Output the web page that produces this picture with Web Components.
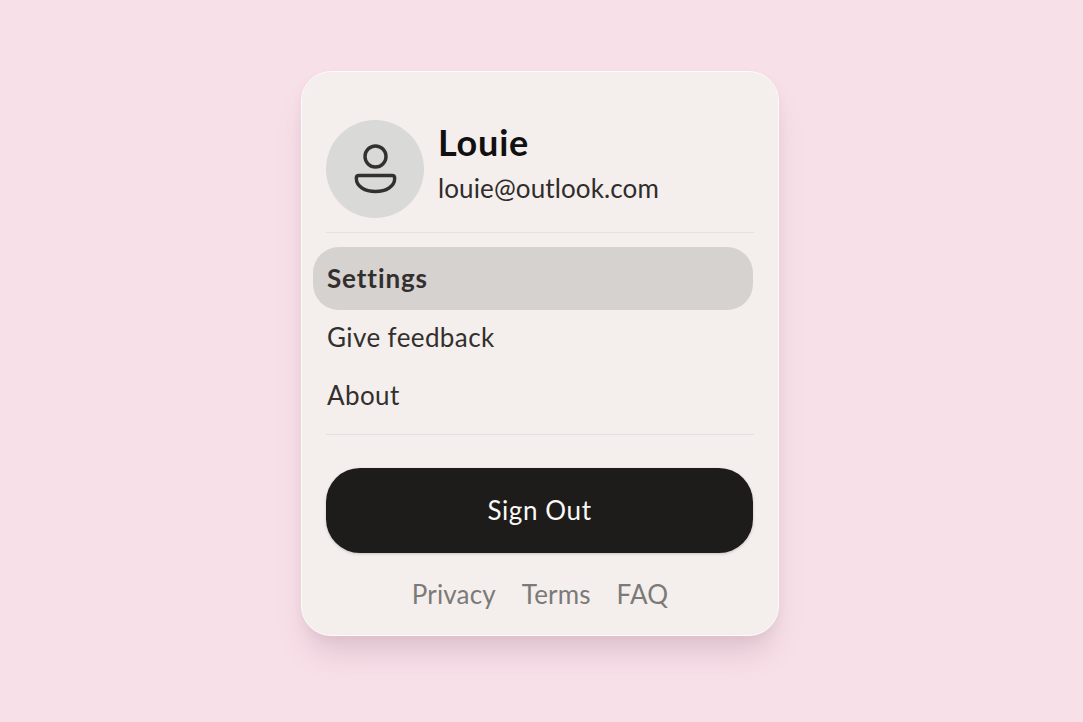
<!DOCTYPE html>
<html lang="en">
<head>
	<meta charset="utf-8">
	<title>Account</title>
	<style>
html, body { margin: 0; padding: 0; height: 100%; }
body { background: #f8e0e9; font-family: "Lato", "Liberation Sans", sans-serif; box-sizing: border-box; padding: 71px 0 0 301px; overflow: hidden; }
	</style>
</head>
<body>
	<account-card>
		<user-head slot="head" name="Louie" email="louie@outlook.com"></user-head>
		<menu-row active>Settings</menu-row>
		<menu-row>Give feedback</menu-row>
		<menu-row>About</menu-row>
		<sign-out slot="action">Sign Out</sign-out>
		<foot-links slot="foot">
			<span>Privacy</span>
			<span>Terms</span>
			<span>FAQ</span>
		</foot-links>
	</account-card>
	<script type="text/javascript">
function Shadow( host, html )
{
	const template = document.createElement( 'template' );
	template.innerHTML = html;
	host.attachShadow( { mode: 'open' } ).appendChild( template.content.cloneNode( true ) );
}

customElements.define( 'account-card', class extends HTMLElement
{
	constructor()
	{
		super();
		Shadow( this, `<style>
:host { display: block; box-sizing: border-box; width: 478px; height: 565px; padding: 48px 24px 0 24px; background: #f4efec; border: 1px solid #fcfafa; border-radius: 30px; box-shadow: 0 22px 30px -6px rgba( 120, 80, 95, 0.2 ), 0 3px 10px rgba( 120, 80, 95, 0.05 ); }
.menu { display: flex; flex-direction: column; padding: 14px 0 0 0; margin: 0 0 0 -13px; }
hr { border: 0; height: 1px; margin: 0; width: 428px; }
.top { background: #e6e1de; }
.bottom { background: #dfe0e1; margin-top: 10.5px; }
.action { display: block; margin-top: 33px; }
.foot { display: block; margin-top: 19px; }
</style>
<slot name="head"></slot>
<hr class="top">
<div class="menu"><slot></slot></div>
<hr class="bottom">
<div class="action"><slot name="action"></slot></div>
<div class="foot"><slot name="foot"></slot></div>` );
	}
} );

customElements.define( 'user-head', class extends HTMLElement
{
	constructor()
	{
		super();
		Shadow( this, `<style>
:host { display: flex; align-items: flex-start; gap: 14px; height: 112px; }
.avatar { width: 98px; height: 98px; border-radius: 50%; background: #d9d9d8; display: flex; align-items: center; justify-content: center; flex: none; }
.name { font-size: 36px; font-weight: 700; line-height: 44px; letter-spacing: 0.8px; color: #111010; }
.email { font-size: 26px; line-height: 32px; letter-spacing: 0.12px; color: #2f2c2b; margin-top: 8px; }
</style>
<div class="avatar">
	<svg width="98" height="98" viewBox="0 0 98 98" fill="none" stroke="#333130" stroke-width="3.4">
		<circle cx="49.5" cy="36.5" r="10.5"/>
		<path d="M33 55.5 H66 Q68.7 55.5 68.7 58.2 C68.7 66.5 60 71.5 49.5 71.5 C39 71.5 30.3 66.5 30.3 58.2 Q30.3 55.5 33 55.5 Z"/>
	</svg>
</div>
<div>
	<div class="name"></div>
	<div class="email"></div>
</div>` );
		this.shadowRoot.querySelector( '.name' ).textContent = this.getAttribute( 'name' );
		this.shadowRoot.querySelector( '.email' ).textContent = this.getAttribute( 'email' );
	}
} );

customElements.define( 'menu-row', class extends HTMLElement
{
	constructor()
	{
		super();
		Shadow( this, `<style>
:host { display: flex; align-items: center; box-sizing: border-box; width: 440px; height: 58px; padding-left: 14px; font-size: 26px; letter-spacing: 0.4px; color: #322f2e; border-radius: 26px; }
:host( [ active ] ) { height: 63px; padding-bottom: 1px; background: #d5d2cf; font-weight: 700; letter-spacing: 0.9px; margin-bottom: -2.5px; }
</style><slot></slot>` );
	}
} );

customElements.define( 'sign-out', class extends HTMLElement
{
	constructor()
	{
		super();
		Shadow( this, `<style>
:host { display: flex; align-items: center; justify-content: center; box-sizing: border-box; width: 427px; height: 85px; padding-bottom: 2px; background: #1d1c1a; color: #fbf9f7; font-size: 26px; letter-spacing: 0.6px; border-radius: 34px; box-shadow: 0 1px 3px rgba( 0, 0, 0, 0.18 ); }
</style><slot></slot>` );
	}
} );

customElements.define( 'foot-links', class extends HTMLElement
{
	constructor()
	{
		super();
		Shadow( this, `<style>
:host { display: flex; justify-content: center; gap: 26px; font-size: 26px; line-height: 44px; letter-spacing: 0.15px; color: #7b7a78; }
</style><slot></slot>` );
	}
} );
	</script>
</body>
</html>
